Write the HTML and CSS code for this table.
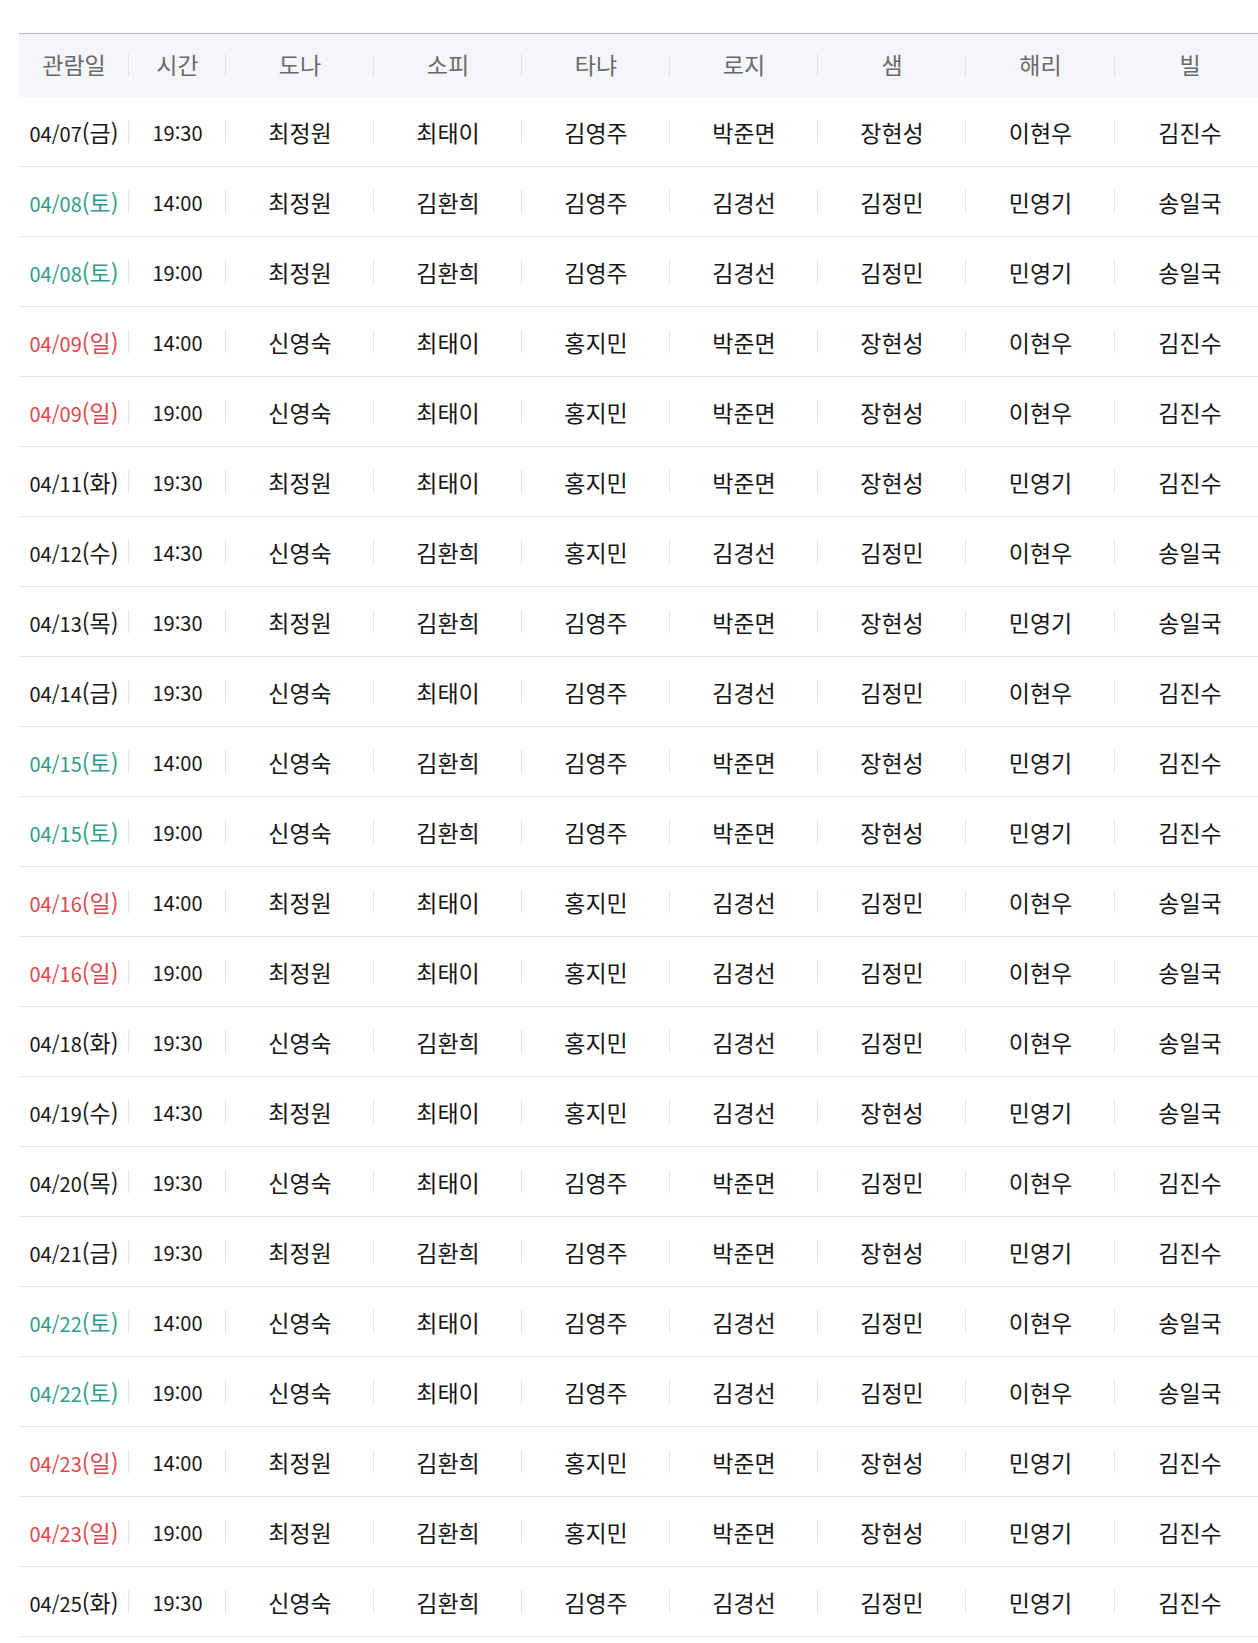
FILE: index.html
```html
<!DOCTYPE html>
<html lang="ko">
<head>
<meta charset="utf-8">
<title>캐스팅 일정</title>
<link rel="stylesheet" href="styles.css">
</head>
<body>
<div class="wrap">
  <div class="table">
    <div class="row head">
      <div class="cell">관람일</div><div class="cell">시간</div><div class="cell">도나</div><div class="cell">소피</div><div class="cell">타냐</div><div class="cell">로지</div><div class="cell">샘</div><div class="cell">해리</div><div class="cell">빌</div>
    </div>
    <div class="row"><div class="cell"><span class="n">04/07</span>(금)</div><div class="cell n">19:30</div><div class="cell">최정원</div><div class="cell">최태이</div><div class="cell">김영주</div><div class="cell">박준면</div><div class="cell">장현성</div><div class="cell">이현우</div><div class="cell">김진수</div></div>
    <div class="row"><div class="cell sat"><span class="n">04/08</span>(토)</div><div class="cell n">14:00</div><div class="cell">최정원</div><div class="cell">김환희</div><div class="cell">김영주</div><div class="cell">김경선</div><div class="cell">김정민</div><div class="cell">민영기</div><div class="cell">송일국</div></div>
    <div class="row"><div class="cell sat"><span class="n">04/08</span>(토)</div><div class="cell n">19:00</div><div class="cell">최정원</div><div class="cell">김환희</div><div class="cell">김영주</div><div class="cell">김경선</div><div class="cell">김정민</div><div class="cell">민영기</div><div class="cell">송일국</div></div>
    <div class="row"><div class="cell sun"><span class="n">04/09</span>(일)</div><div class="cell n">14:00</div><div class="cell">신영숙</div><div class="cell">최태이</div><div class="cell">홍지민</div><div class="cell">박준면</div><div class="cell">장현성</div><div class="cell">이현우</div><div class="cell">김진수</div></div>
    <div class="row"><div class="cell sun"><span class="n">04/09</span>(일)</div><div class="cell n">19:00</div><div class="cell">신영숙</div><div class="cell">최태이</div><div class="cell">홍지민</div><div class="cell">박준면</div><div class="cell">장현성</div><div class="cell">이현우</div><div class="cell">김진수</div></div>
    <div class="row"><div class="cell"><span class="n">04/11</span>(화)</div><div class="cell n">19:30</div><div class="cell">최정원</div><div class="cell">최태이</div><div class="cell">홍지민</div><div class="cell">박준면</div><div class="cell">장현성</div><div class="cell">민영기</div><div class="cell">김진수</div></div>
    <div class="row"><div class="cell"><span class="n">04/12</span>(수)</div><div class="cell n">14:30</div><div class="cell">신영숙</div><div class="cell">김환희</div><div class="cell">홍지민</div><div class="cell">김경선</div><div class="cell">김정민</div><div class="cell">이현우</div><div class="cell">송일국</div></div>
    <div class="row"><div class="cell"><span class="n">04/13</span>(목)</div><div class="cell n">19:30</div><div class="cell">최정원</div><div class="cell">김환희</div><div class="cell">김영주</div><div class="cell">박준면</div><div class="cell">장현성</div><div class="cell">민영기</div><div class="cell">송일국</div></div>
    <div class="row"><div class="cell"><span class="n">04/14</span>(금)</div><div class="cell n">19:30</div><div class="cell">신영숙</div><div class="cell">최태이</div><div class="cell">김영주</div><div class="cell">김경선</div><div class="cell">김정민</div><div class="cell">이현우</div><div class="cell">김진수</div></div>
    <div class="row"><div class="cell sat"><span class="n">04/15</span>(토)</div><div class="cell n">14:00</div><div class="cell">신영숙</div><div class="cell">김환희</div><div class="cell">김영주</div><div class="cell">박준면</div><div class="cell">장현성</div><div class="cell">민영기</div><div class="cell">김진수</div></div>
    <div class="row"><div class="cell sat"><span class="n">04/15</span>(토)</div><div class="cell n">19:00</div><div class="cell">신영숙</div><div class="cell">김환희</div><div class="cell">김영주</div><div class="cell">박준면</div><div class="cell">장현성</div><div class="cell">민영기</div><div class="cell">김진수</div></div>
    <div class="row"><div class="cell sun"><span class="n">04/16</span>(일)</div><div class="cell n">14:00</div><div class="cell">최정원</div><div class="cell">최태이</div><div class="cell">홍지민</div><div class="cell">김경선</div><div class="cell">김정민</div><div class="cell">이현우</div><div class="cell">송일국</div></div>
    <div class="row"><div class="cell sun"><span class="n">04/16</span>(일)</div><div class="cell n">19:00</div><div class="cell">최정원</div><div class="cell">최태이</div><div class="cell">홍지민</div><div class="cell">김경선</div><div class="cell">김정민</div><div class="cell">이현우</div><div class="cell">송일국</div></div>
    <div class="row"><div class="cell"><span class="n">04/18</span>(화)</div><div class="cell n">19:30</div><div class="cell">신영숙</div><div class="cell">김환희</div><div class="cell">홍지민</div><div class="cell">김경선</div><div class="cell">김정민</div><div class="cell">이현우</div><div class="cell">송일국</div></div>
    <div class="row"><div class="cell"><span class="n">04/19</span>(수)</div><div class="cell n">14:30</div><div class="cell">최정원</div><div class="cell">최태이</div><div class="cell">홍지민</div><div class="cell">김경선</div><div class="cell">장현성</div><div class="cell">민영기</div><div class="cell">송일국</div></div>
    <div class="row"><div class="cell"><span class="n">04/20</span>(목)</div><div class="cell n">19:30</div><div class="cell">신영숙</div><div class="cell">최태이</div><div class="cell">김영주</div><div class="cell">박준면</div><div class="cell">김정민</div><div class="cell">이현우</div><div class="cell">김진수</div></div>
    <div class="row"><div class="cell"><span class="n">04/21</span>(금)</div><div class="cell n">19:30</div><div class="cell">최정원</div><div class="cell">김환희</div><div class="cell">김영주</div><div class="cell">박준면</div><div class="cell">장현성</div><div class="cell">민영기</div><div class="cell">김진수</div></div>
    <div class="row"><div class="cell sat"><span class="n">04/22</span>(토)</div><div class="cell n">14:00</div><div class="cell">신영숙</div><div class="cell">최태이</div><div class="cell">김영주</div><div class="cell">김경선</div><div class="cell">김정민</div><div class="cell">이현우</div><div class="cell">송일국</div></div>
    <div class="row"><div class="cell sat"><span class="n">04/22</span>(토)</div><div class="cell n">19:00</div><div class="cell">신영숙</div><div class="cell">최태이</div><div class="cell">김영주</div><div class="cell">김경선</div><div class="cell">김정민</div><div class="cell">이현우</div><div class="cell">송일국</div></div>
    <div class="row"><div class="cell sun"><span class="n">04/23</span>(일)</div><div class="cell n">14:00</div><div class="cell">최정원</div><div class="cell">김환희</div><div class="cell">홍지민</div><div class="cell">박준면</div><div class="cell">장현성</div><div class="cell">민영기</div><div class="cell">김진수</div></div>
    <div class="row"><div class="cell sun"><span class="n">04/23</span>(일)</div><div class="cell n">19:00</div><div class="cell">최정원</div><div class="cell">김환희</div><div class="cell">홍지민</div><div class="cell">박준면</div><div class="cell">장현성</div><div class="cell">민영기</div><div class="cell">김진수</div></div>
    <div class="row"><div class="cell"><span class="n">04/25</span>(화)</div><div class="cell n">19:30</div><div class="cell">신영숙</div><div class="cell">김환희</div><div class="cell">김영주</div><div class="cell">김경선</div><div class="cell">김정민</div><div class="cell">민영기</div><div class="cell">김진수</div></div>
  </div>
</div>
</body>
</html>
```

FILE: styles.css
```css
html, body {
  margin: 0;
  padding: 0;
  background: #ffffff;
  overflow: hidden;
}

.wrap {
  padding: 33px 0 0 19px;
  overflow: hidden;
}

.table {
  width: 1246px;
  font-family: "Noto Sans CJK KR", "Noto Sans", sans-serif;
  font-size: 23px;
  color: #161616;
}

.row {
  display: grid;
  grid-template-columns: 110px 97px 148px 148px 148px 148px 148px 149px 150px;
  height: 69px;
  border-bottom: 1px solid #e3e5e7;
}

.row.head {
  height: 63px;
  border-top: 1px solid #b9bcc5;
  border-bottom: none;
  background: #f5f6f9;
  color: #6a6a6a;
}

.cell {
  display: flex;
  align-items: baseline;
  justify-content: center;
  padding-top: 24px;
  box-sizing: border-box;
  line-height: 1;
  white-space: nowrap;
  background-image: linear-gradient(#dfe1e5, #dfe1e5);
  background-repeat: no-repeat;
  background-position: right center;
  background-size: 1px 23px;
}

.head .cell {
  padding-top: 19px;
}

.cell:last-child {
  background-image: none;
}

.n {
  font-size: 20px;
}

.cell.n {
  padding-top: 26px;
}

.cell.sat {
  color: #2e9c8a;
}

.cell.sun {
  color: #e0474c;
}
```
